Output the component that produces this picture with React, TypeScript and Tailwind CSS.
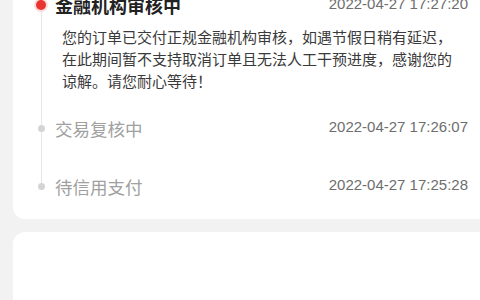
const FONT = '"Liberation Sans", "Noto Sans CJK SC", sans-serif';

type Step = {
  title: string;
  time: string;
  active?: boolean;
  note?: string;
};

const STEPS: Step[] = [
  {
    title: '金融机构审核中',
    time: '2022-04-27 17:27:20',
    active: true,
    note: '您的订单已交付正规金融机构审核，如遇节假日稍有延迟，在此期间暂不支持取消订单且无法人工干预进度，感谢您的谅解。请您耐心等待！',
  },
  { title: '交易复核中', time: '2022-04-27 17:26:07' },
  { title: '待信用支付', time: '2022-04-27 17:25:28' },
];

export default function App() {
  return (
    <div
      className="h-[300px] w-[480px] overflow-hidden bg-[#f2f2f2]"
      style={{ fontFamily: FONT }}
    >
      <div className="-mt-[25px] ml-[13px] mr-[-20px] rounded-xl bg-white pb-[19px] pl-[14px] pr-[32px] pt-[20px]">
        {STEPS.map((step, i) => (
          <TimelineItem key={step.time} step={step} last={i === STEPS.length - 1} />
        ))}
      </div>
      <div className="ml-[13px] mr-[-20px] mt-[13px] h-[120px] rounded-xl bg-white" />
    </div>
  );
}

function TimelineItem({ step, last }: { step: Step; last: boolean }) {
  const gap = step.note ? 'pb-[25px]' : last ? '' : 'pb-[34px]';
  return (
    <div className="flex">
      <div className="flex w-[28px] shrink-0 flex-col items-center">
        {step.active ? (
          <>
            <div className="h-[3px] w-px bg-[#e6e6e6]" />
            <div className="flex h-[14px] w-[14px] items-center justify-center rounded-full bg-[#fcdcdc]">
              <div className="h-[10px] w-[10px] rounded-full bg-[#e8332f]" />
            </div>
          </>
        ) : (
          <>
            <div className="h-[7px] w-px bg-[#e6e6e6]" />
            <div className="h-[7px] w-[7px] rounded-full bg-[#d4d4d4]" />
          </>
        )}
        {!last && <div className="w-px flex-1 bg-[#e6e6e6]" />}
      </div>
      <div className={`min-w-0 flex-1 ${gap}`}>
        <div className="flex items-start justify-between">
          <span
            className={
              step.active
                ? 'text-[18px] font-bold leading-[24px] text-[#222222]'
                : 'text-[17.5px] leading-[24px] text-[#a0a0a0]'
            }
          >
            {step.title}
          </span>
          <span className="text-[15px] leading-[18px] text-[#6e6e6e]">{step.time}</span>
        </div>
        {step.note && (
          <p className="mt-[8px] w-[403px] pl-[7px] text-[15px] leading-[22px] text-[#3a3a3a]">
            {step.note}
          </p>
        )}
      </div>
    </div>
  );
}
